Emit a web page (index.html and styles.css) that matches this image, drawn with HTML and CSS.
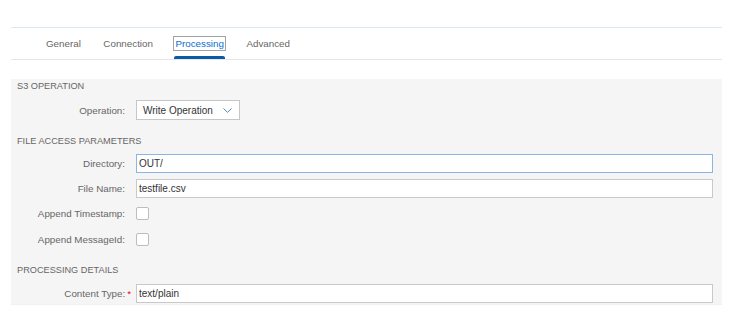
FILE: index.html
```html
<!DOCTYPE html>
<html lang="en">
<head>
    <meta charset="UTF-8">
    <meta name="viewport" content="width=device-width, initial-scale=1.0">
    <title>Adapter Settings - Processing</title>
    <link rel="stylesheet" href="styles.css">
</head>
<body>

<div class="page">
    <!-- Tab strip -->
    <div class="tabs">
        <div class="tab">General</div>
        <div class="tab">Connection</div>
        <div class="tab active"><span class="tab-focus">Processing</span></div>
        <div class="tab">Advanced</div>
    </div>

    <!-- Processing form -->
    <div class="panel">
        <div class="section-title first">S3 OPERATION</div>
        <div class="row select-row">
            <label class="label">Operation:</label>
            <div class="select">
                <span>Write Operation</span>
                <svg class="chevron" width="9" height="5" viewBox="0 0 9 5">
                    <path d="M0.5 0.5 L4.5 4.3 L8.5 0.5" fill="none" stroke="#5b7fb0" stroke-width="1"/>
                </svg>
            </div>
        </div>

        <div class="section-title">FILE ACCESS PARAMETERS</div>
        <div class="row">
            <label class="label">Directory:</label>
            <div class="input focused">OUT/</div>
        </div>
        <div class="row">
            <label class="label">File Name:</label>
            <div class="input">testfile.csv</div>
        </div>
        <div class="row check-row">
            <label class="label">Append Timestamp:</label>
            <div class="checkbox"></div>
        </div>
        <div class="row check-row">
            <label class="label">Append MessageId:</label>
            <div class="checkbox"></div>
        </div>

        <div class="section-title">PROCESSING DETAILS</div>
        <div class="row">
            <label class="label required">Content Type:<span class="star">*</span></label>
            <div class="input">text/plain</div>
        </div>
    </div>
</div>

</body>
</html>
```

FILE: styles.css
```css
body {
    margin: 0;
    padding: 0;
    background-color: #fff;
    font-family: 'Liberation Sans', Arial, sans-serif;
    font-size: 10px;
    color: #333;
}
.page {
    padding-top: 27px;
    margin-left: 11px;
    width: 711px;
}
.tabs {
    display: flex;
    gap: 22.5px;
    height: 31px;
    padding-left: 35px;
    border-top: 1px solid #dbe8f6;
    border-bottom: 1px solid #e6e6e6;
    background-color: #fff;
}
.tab {
    display: flex;
    align-items: center;
    color: #666;
    font-size: 9.8px;
    position: relative;
}
.tab.active {
    color: #0a6ed1;
}
.tab.active::after {
    content: "";
    position: absolute;
    left: -1px;
    right: -1px;
    bottom: 0;
    height: 3px;
    background-color: #0b5aa8;
    border-radius: 2px 2px 0 0;
}
.tab-focus {
    outline: 1px solid #a3a3a3;
    outline-offset: 1px;
}
.panel {
    background-color: #f5f5f5;
    padding: 0 9px 1px 0;
    border-bottom: 1px solid #eef1f6;
}
.section-title {
    height: 14px;
    line-height: 14px;
    margin-top: 14px;
    padding-left: 6px;
    color: #666;
    font-size: 9.2px;
}
.section-title.first {
    margin-top: 19px;
}
.row {
    display: flex;
    align-items: center;
    height: 19px;
    margin-top: 6px;
}
.select-row {
    height: 20px;
    margin-top: 7px;
}
.check-row + .check-row {
    margin-top: 7px;
}
.row:last-child {
    margin-top: 7px;
}
.label {
    width: 114px;
    text-align: right;
    color: #666;
    padding-right: 11px;
    flex-shrink: 0;
    font-size: 9.8px;
}
.label.required {
    padding-right: 5px;
    width: 120px;
}
.star {
    color: #e00;
    margin-left: 2px;
}
.select {
    display: flex;
    align-items: center;
    justify-content: space-between;
    box-sizing: border-box;
    width: 104px;
    height: 20px;
    padding: 0 7px 0 6px;
    background-color: #fff;
    border: 1px solid #c6c6c6;
    color: #333;
}
.chevron {
    display: block;
}
.input {
    flex: 1;
    box-sizing: border-box;
    height: 19px;
    line-height: 17px;
    padding-left: 2px;
    background-color: #fff;
    border: 1px solid #c9c9c9;
    color: #333;
}
.input.focused {
    border-color: #8db4e2;
}
.checkbox {
    box-sizing: border-box;
    width: 13px;
    height: 13px;
    background-color: #fff;
    border: 1px solid #bdbdbd;
    border-radius: 2px;
}
```
